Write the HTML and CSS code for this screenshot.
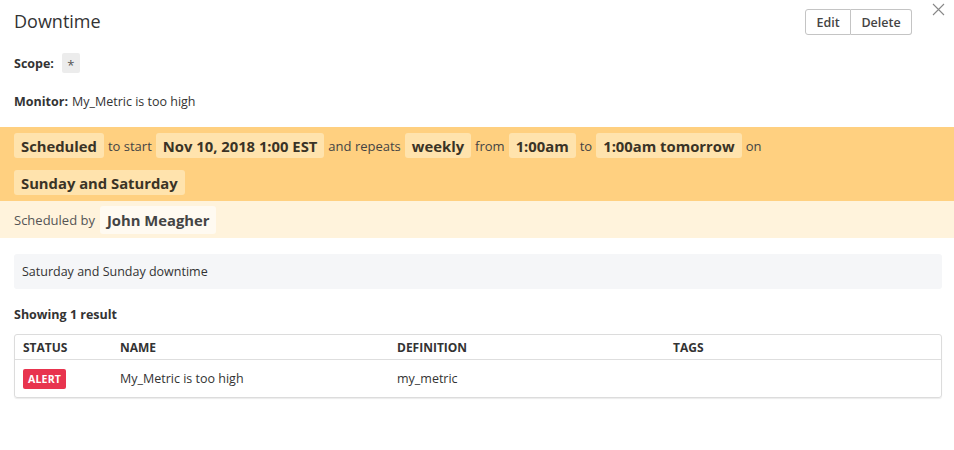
FILE: index.html
```html
<!DOCTYPE html>
<html>
<head>
<meta charset="utf-8">
<link rel="stylesheet" href="styles.css">
</head>
<body>
<div class="page">
  <div class="header">
    <h1 class="title">Downtime</h1>
    <div class="btn-group">
      <button class="btn">Edit</button><button class="btn">Delete</button>
    </div>
    <span class="close" aria-label="close">
      <svg width="13" height="13" viewBox="0 0 13 13"><path d="M1 1L12 12M12 1L1 12" stroke="#888" stroke-width="1.1" fill="none"/></svg>
    </span>
  </div>
  <div class="field scope"><b>Scope:</b> <span class="tag">*</span></div>
  <div class="field monitor"><b>Monitor:</b> My_Metric is too high</div>

  <div class="schedule">
    <div class="line">
      <span class="chip">Scheduled</span><span class="word">to start</span><span class="chip">Nov 10, 2018 1:00 EST</span><span class="word">and repeats</span><span class="chip">weekly</span><span class="word">from</span><span class="chip">1:00am</span><span class="word">to</span><span class="chip">1:00am tomorrow</span><span class="word">on</span>
    </div>
    <div class="line">
      <span class="chip">Sunday and Saturday</span>
    </div>
  </div>
  <div class="byline">
    <span class="word">Scheduled by</span><span class="chip light">John Meagher</span>
  </div>

  <div class="message">Saturday and Sunday downtime</div>

  <div class="results">Showing 1 result</div>
  <div class="table">
    <div class="row head">
      <div class="c1">STATUS</div><div class="c2">NAME</div><div class="c3">DEFINITION</div><div class="c4">TAGS</div>
    </div>
    <div class="row body">
      <div class="c1"><span class="alert">ALERT</span></div><div class="c2">My_Metric is too high</div><div class="c3">my_metric</div><div class="c4"></div>
    </div>
  </div>
</div>
</body>
</html>
```
FILE: styles.css
```css
* { box-sizing: border-box; }
html, body { margin: 0; padding: 0; background: #fff; }
body { font-family: "Open Sans", "Noto Sans", sans-serif; color: #333; font-size: 13px; }
.page { width: 954px; height: 450px; overflow: hidden; }

.header { display: flex; align-items: flex-start; padding: 9px 0 0 14px; height: 44px; }
.title { margin: 0; font-size: 18px; font-weight: 400; line-height: 24px; color: #333; flex: 1; }
.btn-group { display: flex; margin-right: 20px; }
.btn { font-family: inherit; font-size: 12.5px; font-weight: 600; color: #444; background: #fff; border: 1px solid #c4c4c4; height: 26px; padding: 0 9px; margin: 0; }
.btn:first-child { border-radius: 3px 0 0 3px; width: 46px; }
.btn:last-child { border-radius: 0 3px 3px 0; border-left: none; width: 61px; }
.close { margin-top: -7px; margin-right: 9px; display: block; width: 13px; height: 13px; }

.field { padding-left: 14px; font-size: 12.5px; color: #333; display: flex; align-items: center; }
.field b { font-weight: 700; margin-right: 6px; }
.scope { height: 22px; margin-top: 8px; }
.tag { display: inline-flex; align-items: center; justify-content: center; width: 18px; height: 20px; background: #ececec; border-radius: 2px; color: #555; font-size: 13px; padding-top: 3px; margin-left: 2px; }
.monitor { height: 20px; margin-top: 17px; }
.monitor b { margin-right: 4px; }

.schedule { margin-top: 16px; background: #ffd080; padding: 6px 14px 6px 14px; display: flex; flex-direction: column; gap: 12px; }
.line { display: flex; align-items: center; height: 25px; }
.chip { display: inline-flex; align-items: center; height: 25px; padding: 0 7px; background: #ffe3ad; border-radius: 3px; font-weight: 700; font-size: 14.8px; color: #3a3326; }
.word { padding: 0 4px; font-size: 13px; color: #444; }
.byline { background: #fff3dc; height: 37px; padding: 0 14px; display: flex; align-items: center; }
.byline .word { padding-left: 0; padding-right: 5px; color: #555; }
.chip.light { background: #fffaf1; height: 28px; color: #444; padding: 0 7px; }

.message { margin: 16px 12px 0 14px; height: 35px; background: #f5f6f8; border-radius: 3px; padding: 0 8px; display: flex; align-items: center; font-size: 12.5px; color: #333; }

.results { padding-left: 14px; margin-top: 18px; font-weight: 700; font-size: 12.5px; line-height: 16px; color: #333; }

.table { margin: 11px 12px 0 14px; border: 1px solid #dcdcdc; border-radius: 3px; box-shadow: 0 1px 1px rgba(0,0,0,0.08); }
.row { display: flex; align-items: center; }
.row.head { height: 25px; border-bottom: 1px solid #dedede; font-weight: 700; font-size: 12px; color: #333; }
.row.body { height: 37px; font-size: 12.5px; color: #333; }
.c1 { width: 105px; padding-left: 8px; }
.c2 { width: 277px; }
.c3 { width: 276px; }
.c4 { flex: 1; }
.alert { display: inline-flex; align-items: center; height: 20px; padding: 0 5px; background: #e8344e; color: #fff; border-radius: 2px; font-weight: 700; font-size: 10.5px; letter-spacing: 0.2px; }
```
